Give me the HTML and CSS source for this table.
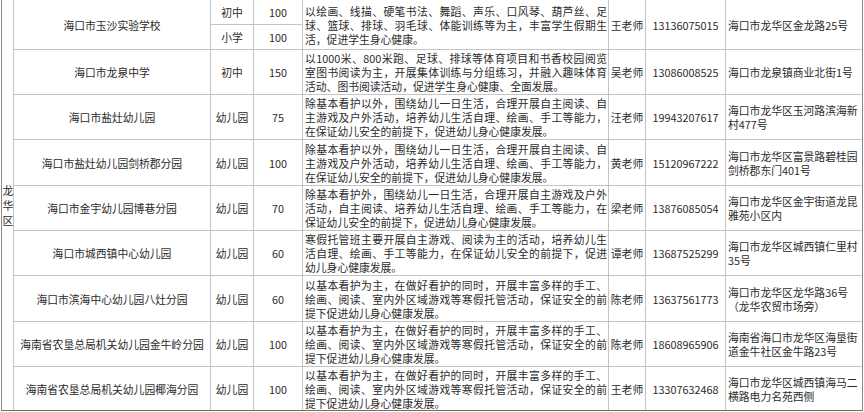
FILE: index.html
```html
<!DOCTYPE html>
<html lang="zh-CN">
<head>
<meta charset="utf-8">
<title>龙华区寒假托管</title>
<link rel="stylesheet" href="styles.css">
</head>
<body>
<div class="sheet">
  <div class="cell district"><span class="dc">龙</span><span class="dc">华</span><span class="dc">区</span></div>

  <div class="cell name r2">海口市玉沙实验学校</div>
  <div class="cell level">初中</div>
  <div class="cell num">100</div>
  <div class="cell desc r2"><span class="j">以绘画、线描、硬笔书法、舞蹈、声乐、口风琴、葫芦丝、足</span><span class="j">球、篮球、排球、羽毛球、体能训练等为主，丰富学生假期生</span><span>活，促进学生身心健康。</span></div>
  <div class="cell teacher r2">王老师</div>
  <div class="cell phone r2">13136075015</div>
  <div class="cell addr r2">海口市龙华区金龙路25号</div>
  <div class="cell level">小学</div>
  <div class="cell num">100</div>

  <div class="cell name">海口市龙泉中学</div>
  <div class="cell level">初中</div>
  <div class="cell num">150</div>
  <div class="cell desc"><span class="j">以1000米、800米跑、足球、排球等体育项目和书香校园阅览</span><span class="j">室图书阅读为主，开展集体训练与分组练习，并融入趣味体育</span><span>活动、图书阅读活动，促进学生身心健康、全面发展。</span></div>
  <div class="cell teacher">吴老师</div>
  <div class="cell phone">13086008525</div>
  <div class="cell addr">海口市龙泉镇商业北街1号</div>

  <div class="cell name">海口市盐灶幼儿园</div>
  <div class="cell level">幼儿园</div>
  <div class="cell num">75</div>
  <div class="cell desc"><span class="j">除基本看护以外，围绕幼儿一日生活，合理开展自主阅读、自</span><span class="j">主游戏及户外活动，培养幼儿生活自理、绘画、手工等能力，</span><span>在保证幼儿安全的前提下，促进幼儿身心健康发展。</span></div>
  <div class="cell teacher">汪老师</div>
  <div class="cell phone">19943207617</div>
  <div class="cell addr"><span class="al">海口市龙华区玉河路滨海新</span><span class="al">村477号</span></div>

  <div class="cell name">海口市盐灶幼儿园剑桥郡分园</div>
  <div class="cell level">幼儿园</div>
  <div class="cell num">100</div>
  <div class="cell desc"><span class="j">除基本看护以外，围绕幼儿一日生活，合理开展自主阅读、自</span><span class="j">主游戏及户外活动，培养幼儿生活自理、绘画、手工等能力，</span><span>在保证幼儿安全的前提下，促进幼儿身心健康发展。</span></div>
  <div class="cell teacher">黄老师</div>
  <div class="cell phone">15120967222</div>
  <div class="cell addr"><span class="al">海口市龙华区富景路碧桂园</span><span class="al">剑桥郡东门401号</span></div>

  <div class="cell name">海口市金宇幼儿园博巷分园</div>
  <div class="cell level">幼儿园</div>
  <div class="cell num">70</div>
  <div class="cell desc"><span class="j">除基本看护外，围绕幼儿一日生活，合理开展自主游戏及户外</span><span class="j">活动，自主阅读、培养幼儿生活自理、绘画、手工等能力，在</span><span>保证幼儿安全的前提下，促进幼儿身心健康发展。</span></div>
  <div class="cell teacher">梁老师</div>
  <div class="cell phone">13876085054</div>
  <div class="cell addr"><span class="al">海口市龙华区金宇街道龙昆</span><span class="al">雅苑小区内</span></div>

  <div class="cell name">海口市城西镇中心幼儿园</div>
  <div class="cell level">幼儿园</div>
  <div class="cell num">60</div>
  <div class="cell desc"><span class="j">寒假托管班主要开展自主游戏、阅读为主的活动，培养幼儿生</span><span class="j">活自理、绘画、手工等能力，在保证幼儿安全的前提下，促进</span><span>幼儿身心健康发展。</span></div>
  <div class="cell teacher">谭老师</div>
  <div class="cell phone">13687525299</div>
  <div class="cell addr"><span class="al">海口市龙华区城西镇仁里村</span><span class="al">35号</span></div>

  <div class="cell name">海口市滨海中心幼儿园八灶分园</div>
  <div class="cell level">幼儿园</div>
  <div class="cell num">60</div>
  <div class="cell desc"><span class="j">以基本看护为主，在做好看护的同时，开展丰富多样的手工、</span><span class="j">绘画、阅读、室内外区域游戏等寒假托管活动，保证安全的前</span><span>提下促进幼儿身心健康发展。</span></div>
  <div class="cell teacher">陈老师</div>
  <div class="cell phone">13637561773</div>
  <div class="cell addr"><span class="al">海口市龙华区龙华路36号</span><span class="al">（龙华农贸市场旁）</span></div>

  <div class="cell name">海南省农垦总局机关幼儿园金牛岭分园</div>
  <div class="cell level">幼儿园</div>
  <div class="cell num">100</div>
  <div class="cell desc"><span class="j">以基本看护为主，在做好看护的同时，开展丰富多样的手工、</span><span class="j">绘画、阅读、室内外区域游戏等寒假托管活动，保证安全的前</span><span>提下促进幼儿身心健康发展。</span></div>
  <div class="cell teacher">陈老师</div>
  <div class="cell phone">18608965906</div>
  <div class="cell addr"><span class="al">海南省海口市龙华区海垦街</span><span class="al">道金牛社区金牛路23号</span></div>

  <div class="cell name">海南省农垦总局机关幼儿园椰海分园</div>
  <div class="cell level">幼儿园</div>
  <div class="cell num">100</div>
  <div class="cell desc"><span class="j">以基本看护为主，在做好看护的同时，开展丰富多样的手工、</span><span class="j">绘画、阅读、室内外区域游戏等寒假托管活动，保证安全的前</span><span>提下促进幼儿身心健康发展。</span></div>
  <div class="cell teacher">王老师</div>
  <div class="cell phone">13307632468</div>
  <div class="cell addr"><span class="al">海口市龙华区城西镇海马二</span><span class="al">横路电力名苑西侧</span></div>
</div>
</body>
</html>
```

FILE: styles.css
```css
html, body {
  margin: 0;
  padding: 0;
  background: #ffffff;
}

.sheet {
  margin-left: 1px;
  width: 860px;
  display: grid;
  grid-template-columns: 11px 196px 42px 48px 305px 36px 79px 136px;
  grid-template-rows: 24px 24px 44px 44px 45px 44px 44px 45px 44px 43px;
  gap: 1px;
  background: #c4c4c4;
  border-left: 1px solid #8a8a8a;
  border-right: 1px solid #8a8a8a;
  border-bottom: 1px solid #6e6e6e;
  font-family: "Noto Sans CJK SC", "Noto Sans", sans-serif;
  font-size: 10.8px;
  line-height: 14px;
  color: #2b2b2b;
}

.cell {
  background: #ffffff;
  display: flex;
  align-items: center;
  justify-content: center;
  text-align: center;
  overflow: hidden;
  white-space: nowrap;
}

.r2 {
  grid-row: span 2;
}

.district {
  grid-row: 1 / span 10;
  flex-direction: column;
  padding-left: 1px;
}

.dc {
  display: block;
  line-height: 15px;
}

.desc {
  flex-direction: column;
  align-items: stretch;
  justify-content: center;
  text-align: left;
  padding: 0 1px 0 2px;
}

.desc span {
  display: block;
}

.desc .j {
  text-align: justify;
  text-align-last: justify;
}

.addr {
  flex-direction: column;
  align-items: flex-start;
  justify-content: center;
  text-align: left;
  padding-left: 2px;
}

.al {
  display: block;
}
```
